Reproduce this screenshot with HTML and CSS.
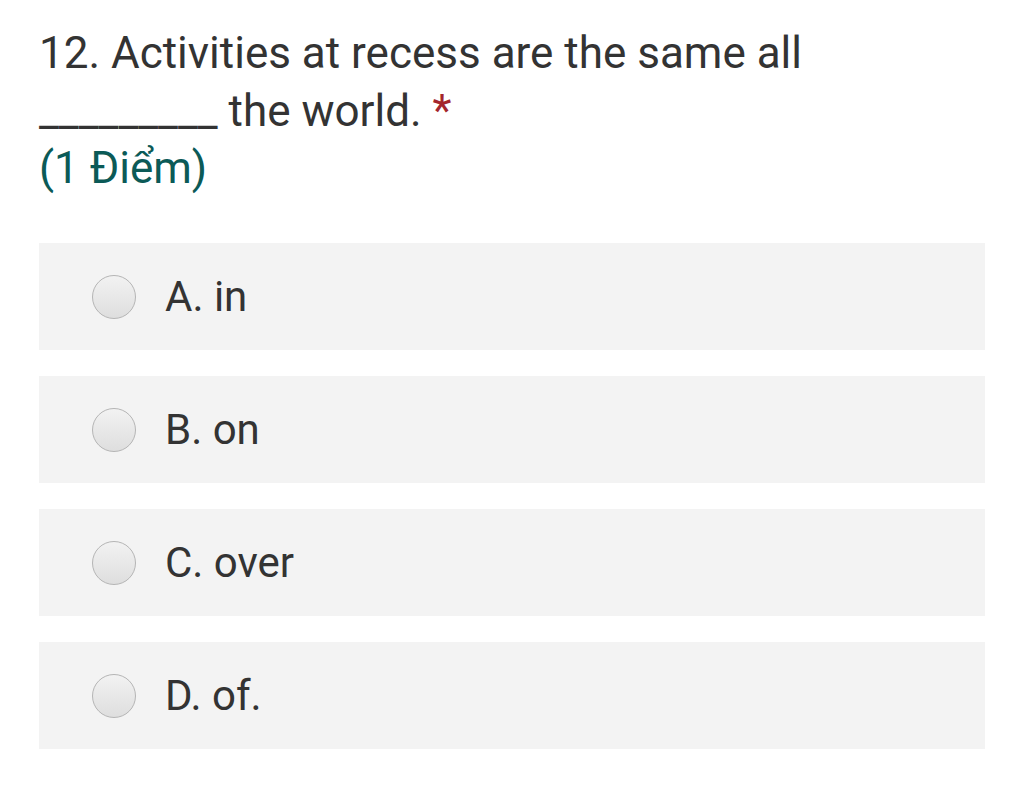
FILE: index.html
```html
<!DOCTYPE html>
<html>
<head>
<meta charset="utf-8">
<link rel="stylesheet" href="styles.css">
</head>
<body>
<div class="page">
  <div class="question">
    <div class="title">12. Activities at recess are the same all _________ the world. <span class="req">*</span></div>
    <div class="points">(1 Điểm)</div>
  </div>
  <div class="options">
    <label class="option"><span class="radio"></span><span class="text">A. in</span></label>
    <label class="option"><span class="radio"></span><span class="text">B. on</span></label>
    <label class="option"><span class="radio"></span><span class="text">C. over</span></label>
    <label class="option"><span class="radio"></span><span class="text">D. of.</span></label>
  </div>
</div>
</body>
</html>
```
FILE: styles.css
```css
html, body {
  margin: 0;
  padding: 0;
  background: #ffffff;
}
.page {
  padding: 24px 39px 0 39px;
  width: 946px;
  font-family: Roboto, "Noto Sans", sans-serif;
}
.title {
  font-size: 44px;
  line-height: 58px;
  color: #333333;
  width: 820px;
}
.req {
  color: #a4262c;
}
.points {
  font-size: 44px;
  line-height: 56px;
  color: #0b5a57;
}
.options {
  margin-top: 47px;
  display: flex;
  flex-direction: column;
  gap: 26px;
}
.option {
  display: flex;
  align-items: center;
  height: 107px;
  background: #f3f3f3;
  padding-left: 53px;
  box-sizing: border-box;
}
.radio {
  width: 44px;
  height: 44px;
  border-radius: 50%;
  border: 1px solid #b5b5b5;
  background: linear-gradient(#f2f2f2, #dedede);
  box-sizing: border-box;
  flex: none;
}
.text {
  margin-left: 29px;
  font-size: 42px;
  color: #333333;
}
```
